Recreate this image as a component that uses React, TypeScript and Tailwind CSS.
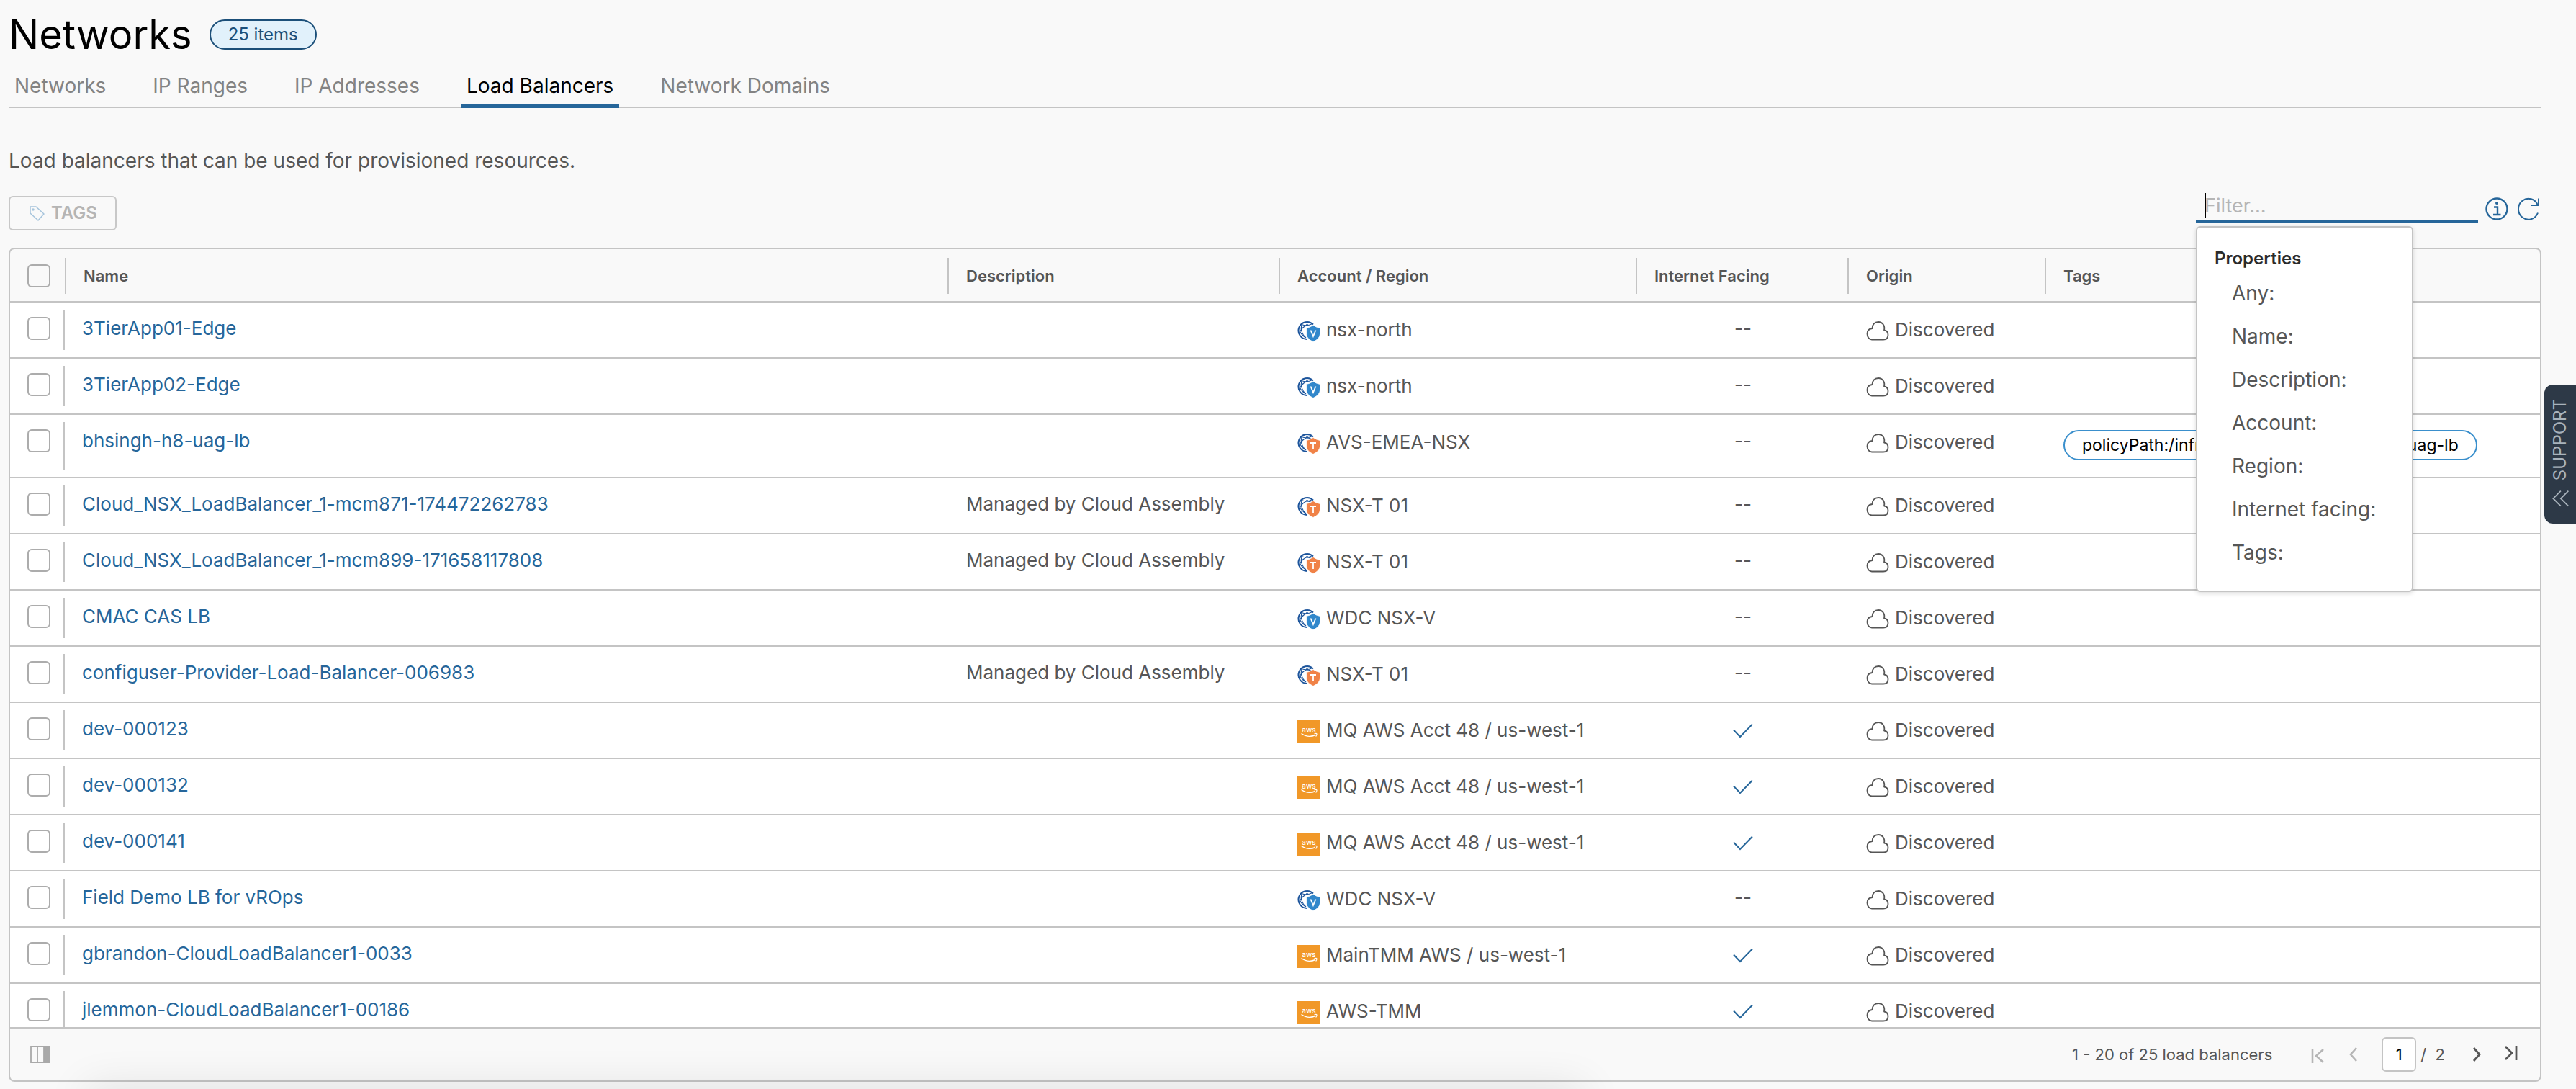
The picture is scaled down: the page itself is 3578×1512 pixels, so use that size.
import { ReactNode } from "react";

type Provider = "nsxv" | "nsxt" | "aws";
type Row = { name: string; description?: string; provider: Provider; account: string; internet: boolean; tag?: string };

const rows: Row[] = [
  { name: "3TierApp01-Edge", provider: "nsxv", account: "nsx-north", internet: false },
  { name: "3TierApp02-Edge", provider: "nsxv", account: "nsx-north", internet: false },
  { name: "bhsingh-h8-uag-lb", provider: "nsxt", account: "AVS-EMEA-NSX", internet: false, tag: "policyPath:/infra/lb-services/bhsingh-h8-uag-lb" },
  { name: "Cloud_NSX_LoadBalancer_1-mcm871-174472262783", description: "Managed by Cloud Assembly", provider: "nsxt", account: "NSX-T 01", internet: false },
  { name: "Cloud_NSX_LoadBalancer_1-mcm899-171658117808", description: "Managed by Cloud Assembly", provider: "nsxt", account: "NSX-T 01", internet: false },
  { name: "CMAC CAS LB", provider: "nsxv", account: "WDC NSX-V", internet: false },
  { name: "configuser-Provider-Load-Balancer-006983", description: "Managed by Cloud Assembly", provider: "nsxt", account: "NSX-T 01", internet: false },
  { name: "dev-000123", provider: "aws", account: "MQ AWS Acct 48 / us-west-1", internet: true },
  { name: "dev-000132", provider: "aws", account: "MQ AWS Acct 48 / us-west-1", internet: true },
  { name: "dev-000141", provider: "aws", account: "MQ AWS Acct 48 / us-west-1", internet: true },
  { name: "Field Demo LB for vROps", provider: "nsxv", account: "WDC NSX-V", internet: false },
  { name: "gbrandon-CloudLoadBalancer1-0033", provider: "aws", account: "MainTMM AWS / us-west-1", internet: true },
  { name: "jlemmon-CloudLoadBalancer1-00186", provider: "aws", account: "AWS-TMM", internet: true },
];

const tabs = ["Networks", "IP Ranges", "IP Addresses", "Load Balancers", "Network Domains"];
const properties = ["Any:", "Name:", "Description:", "Account:", "Region:", "Internet facing:", "Tags:"];

function NsxIcon({ kind }: { kind: "nsxv" | "nsxt" }) {
  const letter = kind === "nsxv" ? "M18.5 14.5 L22 23 L25.5 14.5" : "M18 15 H26 M22 15 V24";
  return (
    <svg viewBox="0 0 32 32" className="mt-1 size-8 shrink-0" fill="none" aria-hidden="true">
      <path d="M22 6.500 A12 12 0 1 0 14 27" stroke="#1d559c" strokeWidth="2" />
      <path d="M6 6.500 Q13 9.500 21 5.500 M13 7.500 L20 9.500 M13 7.500 Q4 12 2.500 20 M6 6.500 Q3 17 12 25 M3 15 Q6 22 12 25" stroke="#1d559c" strokeWidth="1.1" />
      <circle cx="13.500" cy="7.300" r="1.500" fill="#1d559c" />
      <path d="M22 7.500 Q26 10.500 31.500 11.500 V20 Q31 26.500 22 30.500 Q13 26.500 12.500 20 V11.500 Q18 10.500 22 7.500Z" fill={kind === "nsxv" ? "#3187cb" : "#f08247"} stroke="#fff" strokeWidth="0.8" />
      <path d={letter} stroke="#fff" strokeWidth="1.8" />
    </svg>
  );
}

function AwsIcon() {
  return (
    <svg viewBox="0 0 32 32" className="mt-1 size-8 shrink-0" aria-hidden="true">
      <rect width="32" height="32" fill="#f19828" />
      <text x="16" y="16.500" textAnchor="middle" fontSize="10" fontWeight="500" fill="#fff">aws</text>
      <path d="M5.500 18.500 Q15 25 25 20.500" stroke="#fff" strokeWidth="1.400" fill="none" />
      <path d="M23.500 18.800 Q27 17.800 27 19.200 Q27 20.800 25.600 22.500" stroke="#fff" strokeWidth="1.200" fill="none" />
    </svg>
  );
}

function CloudIcon() {
  return (
    <svg viewBox="0 0 32 32" className="mt-1 size-8 shrink-0" fill="none" stroke="#565656" strokeWidth="1.800" aria-hidden="true">
      <path d="M8 27.500 H24 C28 27.500 30.500 25 30.500 21 C30.500 17.500 28.500 15 25 14.500 C26.500 8 22.500 3 17 3 C12 3 8.500 6.500 8.500 12 C4 12.500 1.500 15.500 1.500 19.500 C1.500 24.500 4.500 27.500 8 27.500Z" strokeLinejoin="round" />
    </svg>
  );
}

function Stroke({ children, className }: { children: ReactNode; className: string }) {
  return (
    <svg viewBox="0 0 32 32" fill="none" stroke="currentColor" className={className} aria-hidden="true">
      {children}
    </svg>
  );
}

function Check({ label }: { label: string }) {
  return (
    <input
      type="checkbox"
      aria-label={label}
      className="block size-8 appearance-none rounded-md border-2 border-[#acacac] bg-transparent checked:bg-[#26669a]"
    />
  );
}

function HeadCell({ children, last }: { children: ReactNode; last?: boolean }) {
  return (
    <th scope="col" className="p-0 pt-3 pb-[10px] text-left font-semibold">
      <div className={last ? "flex h-[50px] items-center pl-6" : "flex h-[50px] items-center border-r-2 border-[#c4c4c4] pl-6"}>{children}</div>
    </th>
  );
}

export default function App() {
  return (
    <div className="relative flex h-screen flex-col overflow-hidden bg-[#f9f9f9] pr-12 pb-[10px] pl-3 font-['Inter',sans-serif] text-[26px] leading-8 text-[#565656]">
      <header className="flex items-center gap-6 pt-4">
        <h1 className="text-[56px] leading-[64px] text-black">Networks</h1>
        <span className="flex h-[42px] items-center rounded-full border-2 border-[#1b4f79] bg-[#e1f1fb] px-6 text-[24px] text-[#1b4f79]">25 items</span>
      </header>

      <nav className="mt-3 flex h-[58px] shrink-0 gap-[49px] border-b-2 border-[#c4c4c4] text-[28px] text-[#838383]">
        {tabs.map((t) => (
          <a
            key={t}
            href="#"
            aria-current={t === "Load Balancers" ? "page" : undefined}
            className={
              t === "Load Balancers"
                ? "h-[58px] border-b-6 border-[#26669a] px-2 pt-[11px] text-black"
                : "h-[58px] px-2 pt-[11px]"
            }
          >
            {t}
          </a>
        ))}
      </nav>

      <p className="mt-[57px] text-[28px]">Load balancers that can be used for provisioned resources.</p>

      <div className="mt-[25px] flex h-[80px] shrink-0 items-start justify-between">
        <button type="button" disabled className="mt-2 flex h-12 items-center gap-2 rounded-md border-2 border-[#c8c8c8] px-[25px] text-[24px] font-semibold text-[#b5b5b5]">
          <svg viewBox="0 0 24 24" className="size-6 text-[#a6c4dc]" fill="none" stroke="currentColor" strokeWidth="1.500" aria-hidden="true">
            <path d="M3 3 H11 L22 13 L14 22 L3 12Z" strokeLinejoin="round" />
            <circle cx="7" cy="7" r="1" />
          </svg>
          TAGS
        </button>
        <div className="flex pr-0.5">
          <div className="relative w-[392px]">
            <input
              type="text"
              aria-label="Filter"
              placeholder="Filter..."
              className="block h-[46px] w-full border-b-4 border-[#26669a] bg-transparent px-3 text-[27px] outline-none placeholder:text-[#b5b5b5]"
            />
            <span className="absolute top-1 left-3 h-[34px] w-0.5 bg-black" />
            <div className="absolute top-[50px] left-0 z-10 flex h-[508px] w-[302px] flex-col rounded-md border-2 border-[#c4c4c4] bg-white pt-[25px] shadow-[0_2px_6px_rgba(0,0,0,0.15)]">
              <h2 className="pl-6 text-[24px] leading-9 font-semibold text-[#2b2b2b]">Properties</h2>
              <ul className="text-[28px]">
                {properties.map((p) => (
                  <li key={p}>
                    <button type="button" className="h-[60px] w-full pl-12 text-left">{p}</button>
                  </li>
                ))}
              </ul>
            </div>
          </div>
          <button type="button" aria-label="Filter help" className="mt-2.5 ml-2.5 size-8 text-[#26669a]">
            <Stroke className="size-8">
              <circle cx="16" cy="16" r="14.500" strokeWidth="2.400" />
              <circle cx="16" cy="8" r="2" fill="currentColor" stroke="none" />
              <path d="M12 13.500 H17 V24 M11 24 H21.500" strokeWidth="2.400" />
            </Stroke>
          </button>
          <button type="button" aria-label="Refresh" className="mt-2.5 ml-3 size-8 text-[#26669a]">
            <Stroke className="size-8">
              <path d="M29 21.500 A14 14.500 0 1 1 29 11" strokeWidth="2" />
              <path d="M30 1.500 V11 H20" strokeWidth="2" />
            </Stroke>
          </button>
        </div>
      </div>

      <section className="flex min-h-0 flex-1 flex-col overflow-hidden rounded-lg border-2 border-[#c4c4c4]">
        <div className="min-h-0 flex-1 overflow-hidden">
          <table className="w-full table-fixed border-collapse">
            <colgroup>
              <col className="w-[78px]" />
              <col />
              <col className="w-[460px]" />
              <col className="w-[496px]" />
              <col className="w-[294px]" />
              <col className="w-[274px]" />
              <col className="w-[686px]" />
            </colgroup>
            <thead className="text-[22px]">
              <tr className="border-b-2 border-[#c4c4c4]">
                <HeadCell><Check label="Select all load balancers" /></HeadCell>
                <HeadCell>Name</HeadCell>
                <HeadCell>Description</HeadCell>
                <HeadCell>Account / Region</HeadCell>
                <HeadCell>Internet Facing</HeadCell>
                <HeadCell>Origin</HeadCell>
                <HeadCell last>Tags</HeadCell>
              </tr>
            </thead>
            <tbody className="bg-white">
              {rows.map((r) => (
                <tr key={r.name} className={r.tag ? "h-[88px] border-b-2 border-[#c4c4c4] align-top" : "h-[78px] border-b-2 border-[#c4c4c4] align-top"}>
                  <td className="p-0 py-2.5 pr-0.5">
                    <div className={r.tag ? "h-[66px] border-r-2 border-[#c4c4c4] pt-2.5 pl-6" : "h-14 border-r-2 border-[#c4c4c4] pt-2.5 pl-6"}>
                      <Check label={"Select " + r.name} />
                    </div>
                  </td>
                  <td className="pt-5 pl-[22px]"><a href="#" className="text-[#26669a]">{r.name}</a></td>
                  <td className="pt-5 pl-6">{r.description}</td>
                  <td className="pt-5 pl-6">
                    <div className="flex items-center gap-2">
                      {r.provider === "aws" ? <AwsIcon /> : <NsxIcon kind={r.provider} />}
                      {r.account}
                    </div>
                  </td>
                  <td className="pt-5">
                    <div className="flex justify-center">
                      {r.internet ? (
                        <Stroke className="size-8 text-[#26669a]"><path d="M3 17.500 L12 27 L29 9.500" strokeWidth="2" /></Stroke>
                      ) : (
                        "--"
                      )}
                    </div>
                  </td>
                  <td className="pt-5 pl-6">
                    <div className="flex items-center gap-2"><CloudIcon />Discovered</div>
                  </td>
                  <td className="pt-[21px] pl-6">
                    {r.tag && <span className="inline-flex h-[42px] items-center rounded-full border-2 border-[#3a8fcc] px-6 text-[23px] whitespace-nowrap text-black">{r.tag}</span>}
                  </td>
                </tr>
              ))}
            </tbody>
          </table>
        </div>

        <footer className="flex h-[74px] shrink-0 items-center border-t-2 border-[#c4c4c4] pr-6 pl-7 text-[22px]">
          <button type="button" aria-label="Choose columns" className="text-[#a9a9a9]">
            <svg viewBox="0 0 28 24" className="h-6 w-7" fill="none" stroke="currentColor" strokeWidth="1.800" aria-hidden="true">
              <path d="M1 1 H27 V23 H1Z M10 1 V23" />
              <path d="M19 1 H27 V23 H19Z" fill="currentColor" />
            </svg>
          </button>
          <span className="ml-auto">1 - 20 of 25 load balancers</span>
          <div className="ml-12 flex items-center">
            <button type="button" disabled aria-label="First page" className="size-8 text-[#b5b5b5]"><Stroke className="size-8"><path d="M8 8 V28 M23 9 L13 18 L23 27" strokeWidth="2.600" /></Stroke></button>
            <button type="button" disabled aria-label="Previous page" className="ml-4 size-8 text-[#b5b5b5]"><Stroke className="size-8"><path d="M21 7 L13 16 L21 25" strokeWidth="2.600" /></Stroke></button>
            <input aria-label="Current page" defaultValue="1" className="ml-6 h-12 w-12 rounded-md border-2 border-[#c4c4c4] bg-white text-center text-[22px] text-black outline-none" />
            <span className="ml-1.5">/&nbsp; 2</span>
            <button type="button" aria-label="Next page" className="ml-7 size-8"><Stroke className="size-8"><path d="M12 7 L20 16 L12 25" strokeWidth="2.800" /></Stroke></button>
            <button type="button" aria-label="Last page" className="ml-4 size-8"><Stroke className="size-8"><path d="M8 5 L17 14 L8 23 M23 4 V24" strokeWidth="2.800" /></Stroke></button>
          </div>
        </footer>
      </section>

      <button type="button" className="absolute top-[534px] right-0 flex h-[193px] w-[44px] flex-col items-center justify-center gap-3 rounded-l-xl bg-[#2d3947] text-[24px] text-[#a9b3bc]">
        <span className="rotate-180 [writing-mode:vertical-rl]">SUPPORT</span>
        <Stroke className="size-7"><path d="M17 3 L5 15 L17 27 M29 3 L17 15 L29 27" strokeWidth="2" /></Stroke>
      </button>
      <div aria-hidden="true" className="pointer-events-none absolute -bottom-10 left-[120px] h-10 w-[2080px] shadow-[0_0_60px_rgba(0,0,0,0.12)]" />
    </div>
  );
}
